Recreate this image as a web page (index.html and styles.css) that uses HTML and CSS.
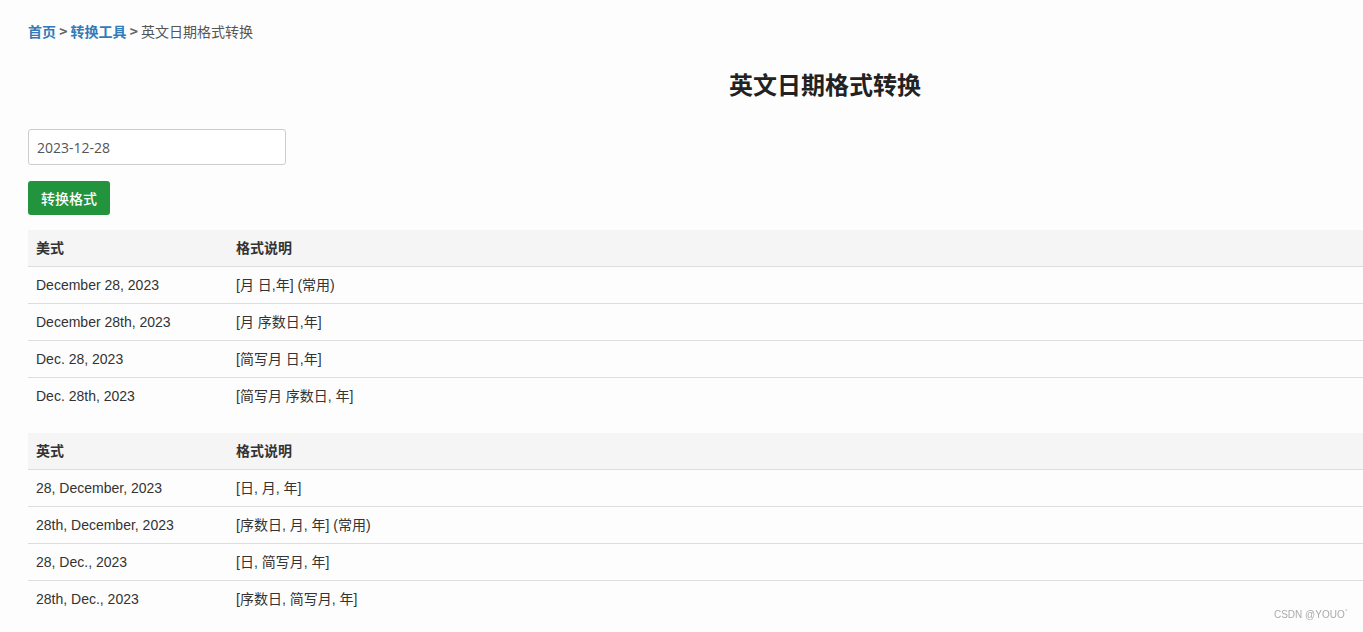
FILE: index.html
```html
<!DOCTYPE html>
<html lang="zh-CN">
<head>
    <meta charset="UTF-8">
    <meta name="viewport" content="width=device-width, initial-scale=1.0">
    <title>英文日期格式转换</title>
    <link rel="stylesheet" href="styles.css">
</head>
<body>
    <div class="page">
        <div class="crumbs">
            <a href="#">首页</a> <span class="sep">&gt;</span>
            <a href="#">转换工具</a> <span class="sep">&gt;</span>
            <span class="current">英文日期格式转换</span>
        </div>

        <h2 class="title">英文日期格式转换</h2>

        <div class="form">
            <input class="date-input" type="text" value="2023-12-28">
            <button class="btn-convert">转换格式</button>
        </div>

        <table class="fmt-table">
            <thead>
                <tr><th class="col-date">美式</th><th>格式说明</th></tr>
            </thead>
            <tbody>
                <tr><td>December 28, 2023</td><td>[月 日,年] (常用)</td></tr>
                <tr><td>December 28th, 2023</td><td>[月 序数日,年]</td></tr>
                <tr><td>Dec. 28, 2023</td><td>[简写月 日,年]</td></tr>
                <tr><td>Dec. 28th, 2023</td><td>[简写月 序数日, 年]</td></tr>
            </tbody>
        </table>

        <table class="fmt-table">
            <thead>
                <tr><th class="col-date">英式</th><th>格式说明</th></tr>
            </thead>
            <tbody>
                <tr><td>28, December, 2023</td><td>[日, 月, 年]</td></tr>
                <tr><td>28th, December, 2023</td><td>[序数日, 月, 年] (常用)</td></tr>
                <tr><td>28, Dec., 2023</td><td>[日, 简写月, 年]</td></tr>
                <tr><td>28th, Dec., 2023</td><td>[序数日, 简写月, 年]</td></tr>
            </tbody>
        </table>
    </div>

    <div class="watermark">CSDN @YOUO`</div>
</body>
</html>
```

FILE: styles.css
```css
html {
    overflow: hidden;
}

body {
    margin: 0;
    background-color: #fdfdfd;
    color: #333;
    font-family: 'Liberation Sans', Arial, 'Noto Sans CJK SC', sans-serif;
    font-size: 14px;
    line-height: 20px;
}

.page {
    width: 1594px;
    padding: 21px 0 0 28px;
}

.crumbs {
    color: #555;
    font-family: 'Noto Sans CJK SC', sans-serif;
    font-size: 14px;
    line-height: 20px;
}

.crumbs a {
    color: #337ab7;
    font-weight: bold;
    text-decoration: none;
}

.crumbs .sep {
    color: #666;
    font-weight: bold;
}

.title {
    margin: 26px 0 0;
    text-align: center;
    font-family: 'Noto Sans CJK SC', sans-serif;
    font-size: 24px;
    line-height: 34px;
    font-weight: bold;
    color: #222;
}

.form {
    display: flex;
    flex-direction: column;
    align-items: flex-start;
    gap: 16px;
    margin-top: 28px;
    margin-bottom: 15px;
}

.date-input {
    box-sizing: border-box;
    width: 258px;
    height: 36px;
    padding: 0 8px;
    border: 1px solid #ccc;
    border-radius: 3px;
    background: #fff;
    color: #555;
    font-family: 'Open Sans', sans-serif;
    font-size: 14px;
}

.btn-convert {
    height: 34px;
    padding: 0 13px;
    border: none;
    border-radius: 3px;
    background-color: #22943d;
    color: #fff;
    font-family: 'Noto Sans CJK SC', sans-serif;
    font-size: 14px;
    font-weight: 500;
}

.fmt-table {
    width: 100%;
    border-collapse: collapse;
    margin-bottom: 19px;
}

.fmt-table th,
.fmt-table td {
    padding: 8px;
    text-align: left;
    line-height: 20px;
}

.fmt-table th {
    background-color: #f5f5f5;
    font-weight: bold;
    border-bottom: 1px solid #ddd;
}

.fmt-table td {
    border-top: 1px solid #ddd;
}

.fmt-table tbody tr:first-child td {
    border-top: none;
}

.col-date {
    width: 184px;
}

.watermark {
    position: fixed;
    right: 15px;
    bottom: 7px;
    color: #aaa;
    font-family: 'Liberation Sans', Arial, sans-serif;
    font-size: 10px;
}
```
